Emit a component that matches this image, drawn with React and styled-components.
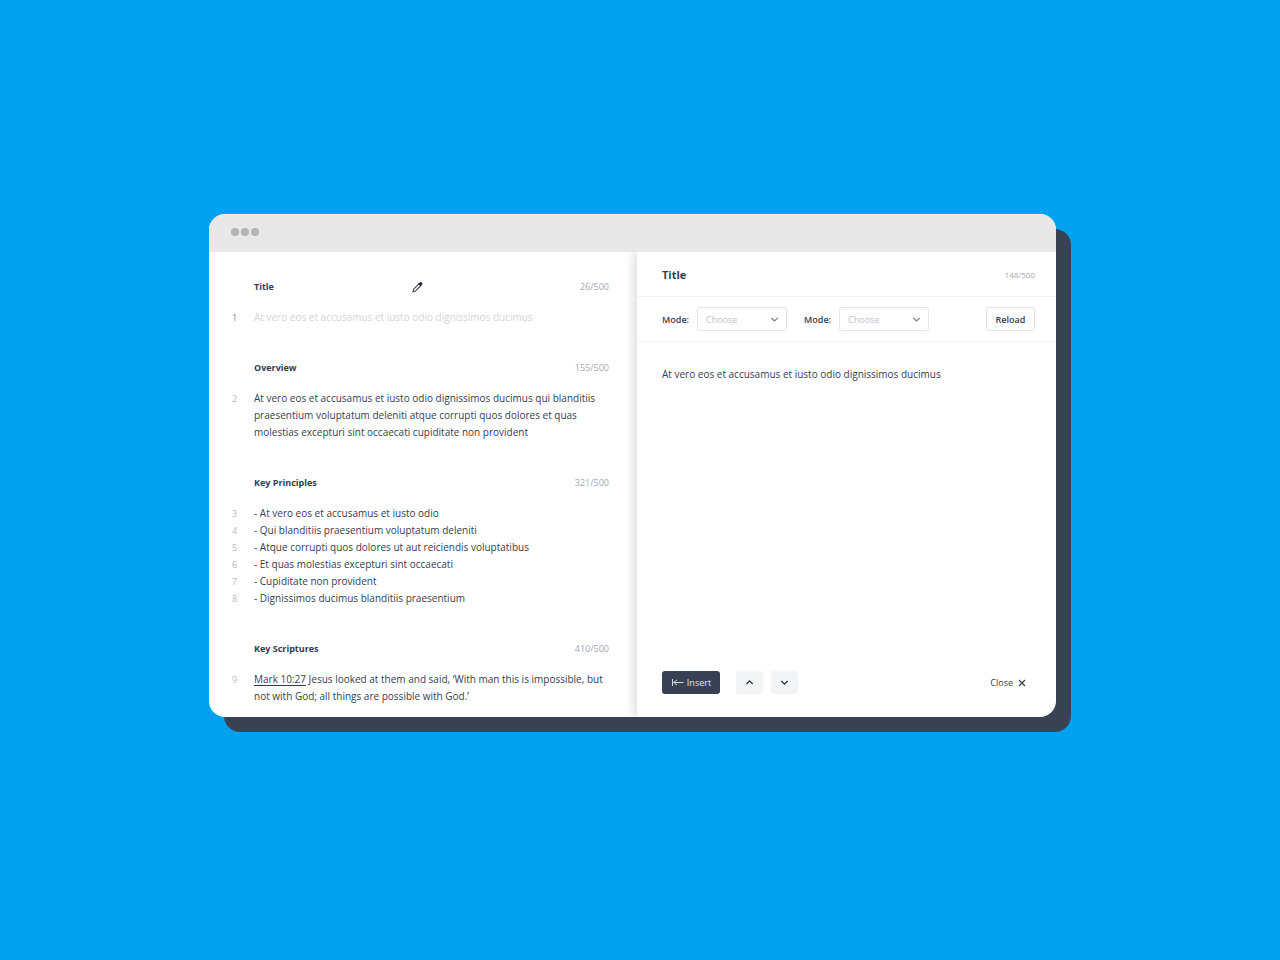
import React from 'react';
import styled, { createGlobalStyle } from 'styled-components';

const GlobalStyle = createGlobalStyle`
  *, *::before, *::after { box-sizing: border-box; }
  body {
    margin: 0;
    background: #00a2ef;
    color: #343e50;
    font-family: "Open Sans", "Liberation Sans", sans-serif;
    font-size: 10px;
    line-height: 17px;
    font-weight: 500;
  }
  button, select, textarea { font: inherit; color: inherit; margin: 0; }
  h2, h3, p { margin: 0; }
`;

const Page = styled.div`
  min-height: 100vh;
  padding: 214px 209px 40px;
`;

const Window = styled.main`
  display: flex;
  flex-direction: column;
  margin-right: 15px;
  border-radius: 16px;
  overflow: hidden;
  background: #fff;
  box-shadow: 15px 15px 0 #394252;
`;

const TitleBar = styled.div`
  display: flex;
  align-items: center;
  gap: 2px;
  height: 38px;
  padding: 0 22px 2px;
  background: #e8e8e8;
`;

const Dot = styled.span`
  width: 8px;
  height: 8px;
  border-radius: 50%;
  background: #b4b4b4;
`;

const Panels = styled.div`
  display: grid;
  grid-template-columns: 428fr 419fr;
  overflow: hidden;
`;

const Outline = styled.div`
  display: flex;
  flex-direction: column;
  gap: 33px;
  padding: 26px 28px 12px 23px;
`;

const Section = styled.section`
  display: flex;
  flex-direction: column;
  gap: 14px;
`;

const SectionHead = styled.header`
  display: grid;
  grid-template-columns: 11fr auto 13fr;
  align-items: center;
  padding-left: 22px;
`;

const SectionTitle = styled.h3`
  font-size: 9px;
  line-height: 17px;
  font-weight: 700;
  white-space: nowrap;
`;

const IconButton = styled.button`
  display: flex;
  padding: 0;
  border: 0;
  background: none;
`;

const Counter = styled.span`
  grid-column: 3;
  justify-self: end;
  font-size: ${(p) => (p.$small ? 8 : 9)}px;
  font-weight: 400;
  color: #a3a8b5;
`;

const Row = styled.div`
  display: grid;
  grid-template-columns: 22px 1fr;
`;

const LineNumber = styled.span`
  font-size: 9px;
  font-weight: 400;
  color: ${(p) => (p.$active ? '#7d8493' : '#b4b9c4')};
`;

const Line = styled.p`
  color: ${(p) => (p.$muted ? '#d3d5da' : 'inherit')};
`;

const Reference = styled.a`
  color: inherit;
  text-underline-offset: 2px;
`;

const Editor = styled.div`
  display: flex;
  flex-direction: column;
  box-shadow: -3px 0 10px rgba(0, 0, 0, 0.14);
`;

const EditorHead = styled.header`
  display: flex;
  align-items: center;
  justify-content: space-between;
  height: 45px;
  padding: 0 21px 0 25px;
  border-bottom: 1px solid #f1f2f4;
`;

const EditorTitle = styled.h2`
  font-size: 11px;
  line-height: 17px;
  font-weight: 700;
`;

const Toolbar = styled.div`
  display: flex;
  align-items: center;
  gap: 17px;
  height: 45px;
  padding: 0 21px 0 25px;
  border-bottom: 1px solid #f1f2f4;
`;

const Field = styled.label`
  display: flex;
  align-items: center;
  gap: 8px;
  font-size: 9px;
  font-weight: 600;
`;

const SelectBox = styled.span`
  display: grid;
  grid-template-columns: 1fr 17px;
  align-items: center;
  width: 90px;

  svg {
    grid-area: 1 / 2;
    pointer-events: none;
  }
`;

const Select = styled.select`
  grid-area: 1 / 1 / 2 / 3;
  appearance: none;
  height: 24px;
  padding: 0 20px 0 8px;
  border: 1px solid #e1e4e9;
  border-radius: 3px;
  background: #fff;
  color: #bcc0c9;
  font-size: 9px;
  font-weight: 400;
`;

const ReloadButton = styled.button`
  height: 24px;
  width: 49px;
  margin-left: auto;
  padding: 0;
  border: 1px solid #e1e4e9;
  border-radius: 3px;
  background: #fff;
  font-size: 9px;
  font-weight: 600;
`;

const TextInput = styled.textarea`
  flex: 1;
  min-height: 60px;
  padding: 24px 21px 0 25px;
  border: 0;
  outline: 0;
  resize: none;
  background: none;
`;

const Footer = styled.footer`
  display: flex;
  align-items: center;
  padding: 0 30px 23px 25px;
`;

const InsertButton = styled.button`
  display: flex;
  align-items: center;
  justify-content: center;
  gap: 3px;
  width: 58px;
  height: 23px;
  margin-right: 16px;
  padding: 0;
  border: 0;
  border-radius: 3px;
  background: #374153;
  color: #e3e6ea;
  font-size: 9px;
`;

const StepButton = styled.button`
  display: grid;
  place-items: center;
  width: 27px;
  height: 23px;
  margin-right: 8px;
  padding: 0;
  border: 0;
  border-radius: 3px;
  background: #f3f4f6;
`;

const CloseButton = styled.button`
  display: flex;
  align-items: center;
  gap: 5px;
  margin-left: auto;
  padding: 0;
  border: 0;
  background: none;
  font-size: 9px;
`;

const Pencil = () => (
  <svg width="11" height="12" viewBox="0 0 11 12" fill="none" aria-hidden="true">
    <path d="M1 10.8 1.5 8.3 7 2.6 8.9 4.5 3.4 10.2Z" stroke="#4a5364" strokeWidth="1.2" strokeLinejoin="round" />
    <path d="M6.3 2.9 8 1.3Q8.8.6 9.7 1.4L10.1 1.8Q10.9 2.7 10.1 3.6L8.5 5.2Z" fill="#1f2839" />
  </svg>
);

const Chevron = ({ up, color = '#343e50', width = 1.4 }) => (
  <svg width="9" height="7" viewBox="0 0 9 7" fill="none" aria-hidden="true">
    <path d={up ? 'M1.3 5 4.5 2 7.7 5' : 'M1.3 2 4.5 5 7.7 2'} stroke={color} strokeWidth={width} />
  </svg>
);

const InsertArrow = () => (
  <svg width="13" height="9" viewBox="0 0 13 9" fill="none" stroke="#d5d9df" aria-hidden="true">
    <path d="M1.5 1V8M2.5 4.5H12.5M6 1.8 2.8 4.5 6 7.2" />
  </svg>
);

const Cross = () => (
  <svg width="8" height="8" viewBox="0 0 8 8" stroke="#343e50" strokeWidth="1.2" aria-hidden="true">
    <path d="M1 1 7 7M7 1 1 7" />
  </svg>
);

const sections = [
  {
    title: 'Title',
    count: '26/500',
    editing: true,
    lines: ['At vero eos et accusamus et iusto odio dignissimos ducimus'],
  },
  {
    title: 'Overview',
    count: '155/500',
    lines: [
      'At vero eos et accusamus et iusto odio dignissimos ducimus qui blanditiis praesentium voluptatum deleniti atque corrupti quos dolores et quas molestias excepturi sint occaecati cupiditate non provident',
    ],
  },
  {
    title: 'Key Principles',
    count: '321/500',
    lines: [
      '- At vero eos et accusamus et iusto odio',
      '- Qui blanditiis praesentium voluptatum deleniti',
      '- Atque corrupti quos dolores ut aut reiciendis voluptatibus',
      '- Et quas molestias excepturi sint occaecati',
      '- Cupiditate non provident',
      '- Dignissimos ducimus blanditiis praesentium',
    ],
  },
  {
    title: 'Key Scriptures',
    count: '410/500',
    lines: [
      <>
        <Reference href="#mark-10-27">Mark 10:27</Reference> Jesus looked at them and said, ‘With man this is
        impossible, but not with God; all things are possible with God.’
      </>,
    ],
  },
];

const ModeField = () => (
  <Field>
    Mode:
    <SelectBox>
      <Select defaultValue="">
        <option value="">Choose</option>
      </Select>
      <Chevron color="#7c8493" width={1.2} />
    </SelectBox>
  </Field>
);

export default function App() {
  let number = 0;
  return (
    <Page>
      <GlobalStyle />
      <Window>
        <TitleBar>
          <Dot />
          <Dot />
          <Dot />
        </TitleBar>
        <Panels>
          <Outline>
            {sections.map((section) => (
              <Section key={section.title}>
                <SectionHead>
                  <SectionTitle>{section.title}</SectionTitle>
                  {section.editing && (
                    <IconButton type="button" aria-label="Edit title">
                      <Pencil />
                    </IconButton>
                  )}
                  <Counter>{section.count}</Counter>
                </SectionHead>
                <div>
                  {section.lines.map((line) => {
                    number += 1;
                    return (
                      <Row key={number}>
                        <LineNumber $active={section.editing}>{number}</LineNumber>
                        <Line $muted={section.editing}>{line}</Line>
                      </Row>
                    );
                  })}
                </div>
              </Section>
            ))}
          </Outline>
          <Editor>
            <EditorHead>
              <EditorTitle>Title</EditorTitle>
              <Counter $small>148/500</Counter>
            </EditorHead>
            <Toolbar>
              <ModeField />
              <ModeField />
              <ReloadButton type="button">Reload</ReloadButton>
            </Toolbar>
            <TextInput
              aria-label="Title text"
              spellCheck={false}
              defaultValue="At vero eos et accusamus et iusto odio dignissimos ducimus"
            />
            <Footer>
              <InsertButton type="button">
                <InsertArrow />
                Insert
              </InsertButton>
              <StepButton type="button" aria-label="Previous">
                <Chevron up />
              </StepButton>
              <StepButton type="button" aria-label="Next">
                <Chevron />
              </StepButton>
              <CloseButton type="button">
                Close
                <Cross />
              </CloseButton>
            </Footer>
          </Editor>
        </Panels>
      </Window>
    </Page>
  );
}
